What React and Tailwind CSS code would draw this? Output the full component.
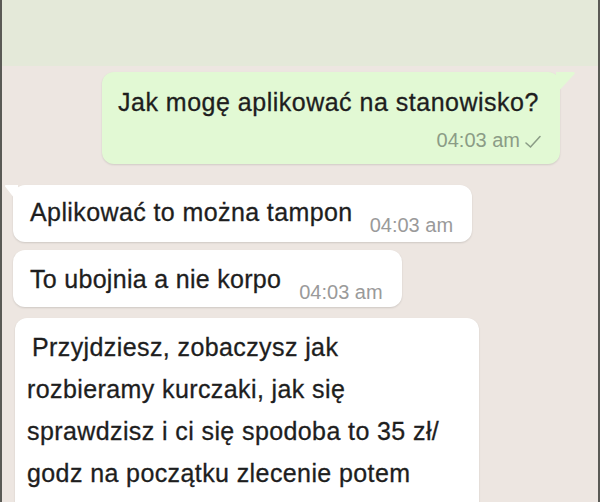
import React from 'react';

const font = { fontFamily: '"Liberation Sans", Arial, sans-serif' };

const Check = () => (
  <svg width="18" height="14" viewBox="0 0 18 14" className="ml-[4px] mb-[2px]">
    <path d="M2 8 L6.5 12 L16 1.5" fill="none" stroke="#8b9c86" strokeWidth="1.6" strokeLinecap="round" />
  </svg>
);

const Incoming = ({ className, tail, children }) => (
  <div className={`relative bg-white rounded-[12px] shadow-[0_1px_2px_rgba(0,0,0,0.13)] ${className}`}>
    {tail && (
      <svg width="14" height="18" viewBox="0 0 14 18" className="absolute left-[-9px] top-[0px]">
        <path d="M14 0 L2 0 Q0 0 1.5 2 L14 18 Z" fill="#ffffff" />
      </svg>
    )}
    {children}
  </div>
);

export default function App() {
  return (
    <div className="w-[600px] h-[502px] overflow-hidden flex flex-col border-l-[2px] border-r-[2px] border-[#5a5a55] bg-[#ede6e1]" style={font}>
      {/* header strip */}
      <div className="h-[66px] shrink-0 bg-[#e4e9d9]" />

      {/* chat */}
      <div className="flex flex-col text-[#1e1e1e] [-webkit-text-stroke:0.3px_#1e1e1e]">
        {/* outgoing */}
        <div className="relative ml-[100px] mt-[6px] w-[458px] h-[92px] bg-[#e2f9d4] rounded-[12px] shadow-[0_1px_2px_rgba(0,0,0,0.12)] pl-[16px] pr-[18px] pt-[15px]">
          <svg width="20" height="22" viewBox="0 0 20 22" className="absolute right-[-16px] top-[0px]">
            <path d="M0 0 L17 0 Q20 0 18 2.5 L0 22 Z" fill="#e2f9d4" />
          </svg>
          <div className="text-[25px] leading-[30px] tracking-[0.5px]">Jak mogę aplikować na stanowisko?</div>
          <div className="flex items-end justify-end mt-[12px] mr-[0px] text-[20px] leading-[22px] text-[#8b9c86] [-webkit-text-stroke:0px]">
            04:03 am
            <Check />
          </div>
        </div>

        {/* incoming 1 */}
        <Incoming tail className="ml-[11px] mt-[21px] w-[459px] h-[57px] flex items-start pl-[17px]">
          <span className="text-[25px] leading-[30px] tracking-[0.4px] mt-[12px]">Aplikować to można tampon</span>
          <span className="ml-[17px] mt-[29px] text-[20px] leading-[22px] text-[#9a9a9a] [-webkit-text-stroke:0px]">04:03 am</span>
        </Incoming>

        {/* incoming 2 */}
        <Incoming className="ml-[11px] mt-[8px] w-[389px] h-[57px] flex items-start pl-[17px]">
          <span className="text-[25px] leading-[30px] tracking-[0.3px] mt-[14px]">To ubojnia a nie korpo</span>
          <span className="ml-[18px] mt-[31px] text-[20px] leading-[22px] text-[#9a9a9a] [-webkit-text-stroke:0px]">04:03 am</span>
        </Incoming>

        {/* incoming 3 */}
        <div className="ml-[13px] mt-[11px] w-[464px] h-[200px] bg-white rounded-[12px] shadow-[0_1px_2px_rgba(0,0,0,0.13)] pl-[12px] pt-[8px] text-[25px] leading-[42px] tracking-[0.4px]">
          <div className="pl-[5px]">Przyjdziesz, zobaczysz jak</div>
          <div>rozbieramy kurczaki, jak się</div>
          <div>sprawdzisz i ci się spodoba to 35 zł/</div>
          <div>godz na początku zlecenie potem</div>
        </div>
      </div>
    </div>
  );
}
